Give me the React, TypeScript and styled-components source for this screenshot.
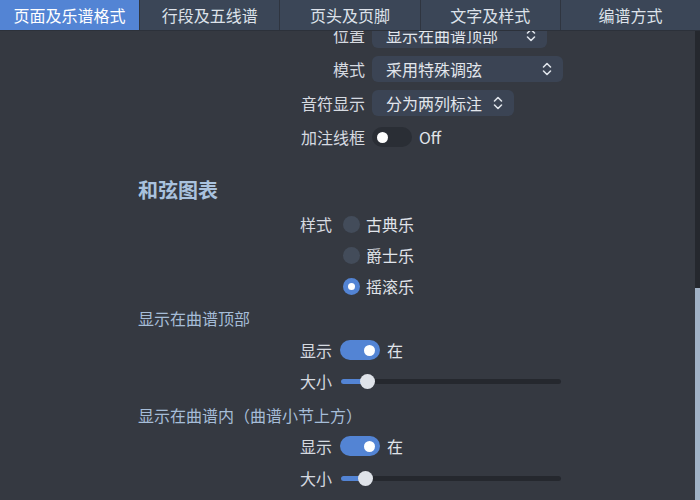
import React, { useLayoutEffect, useRef } from "react";
import styled, { createGlobalStyle } from "styled-components";

const Global = createGlobalStyle`
  html, body { margin: 0; padding: 0; background: #353941; }
  body { font-family: "Noto Sans CJK SC", "Noto Sans", sans-serif; }
  * { box-sizing: border-box; }
`;

const Page = styled.div`
  width: 700px;
  height: 500px;
  display: flex;
  flex-direction: column;
  background: #353941;
  overflow: hidden;
`;

const TabBar = styled.div`
  display: flex;
  height: 31px;
  flex: 0 0 31px;
  background: #3b4657;
  border-bottom: 1px solid #2c313a;
`;

const Tab = styled.div<{ $active?: boolean }>`
  flex: 1;
  display: flex;
  align-items: center;
  justify-content: center;
  font-size: 16px;
  color: ${(p) => (p.$active ? "#ffffff" : "#dde2ea")};
  background: ${(p) => (p.$active ? "#5384d4" : "transparent")};
  border-right: 1px solid #2f3540;
  &:last-child { border-right: none; }
`;

const Body = styled.div`
  flex: 1;
  display: flex;
  min-height: 0;
`;

const Viewport = styled.div`
  flex: 1;
  overflow: hidden;
`;

const ScrollTrack = styled.div`
  flex: 0 0 5px;
  display: flex;
  flex-direction: column;
  background: #25282e;
`;

const ScrollSpacer = styled.div`
  flex: 0 0 257px;
`;

const ScrollThumb = styled.div`
  flex: 1;
  background: #a2b3c7;
`;

const Content = styled.div`
  padding: 16px 0 60px 138px;
  display: flex;
  flex-direction: column;
`;

const Grid = styled.div<{ $label: number; $gap: number; $rowGap: number; $rowH: number; $mt: number }>`
  display: grid;
  grid-template-columns: ${(p) => p.$label}px auto;
  column-gap: ${(p) => p.$gap}px;
  row-gap: ${(p) => p.$rowGap}px;
  grid-auto-rows: ${(p) => p.$rowH}px;
  margin-top: ${(p) => p.$mt}px;
  align-items: center;
  justify-items: start;
`;

const Label = styled.div`
  justify-self: end;
  font-size: 16px;
  color: #d6dae0;
  line-height: 24px;
  white-space: nowrap;
`;

const Select = styled.div<{ $w: number }>`
  width: ${(p) => p.$w}px;
  height: 26px;
  border-radius: 6px;
  background: #3b4454;
  display: flex;
  align-items: center;
  justify-content: space-between;
  padding: 0 11px 0 14px;
  font-size: 16px;
  color: #e2e6ec;
  white-space: nowrap;
`;

const Heading = styled.div<{ $mt: number }>`
  margin-top: ${(p) => p.$mt}px;
  font-size: 20px;
  font-weight: 700;
  line-height: 28px;
  color: #a9c2de;
`;

const SubHeading = styled.div<{ $mt: number }>`
  margin-top: ${(p) => p.$mt}px;
  font-size: 16px;
  line-height: 24px;
  color: #a6bdd8;
  white-space: nowrap;
`;

const Inline = styled.div`
  display: flex;
  align-items: center;
  gap: 7px;
  font-size: 16px;
  color: #e0e4ea;
`;

const Toggle = styled.div<{ $on?: boolean }>`
  width: 40px;
  height: 20px;
  border-radius: 10px;
  background: ${(p) => (p.$on ? "#5384d4" : "#2a2e35")};
  display: flex;
  align-items: center;
  justify-content: ${(p) => (p.$on ? "flex-end" : "flex-start")};
  padding: 0 5px;
`;

const Knob = styled.div`
  width: 11px;
  height: 11px;
  border-radius: 50%;
  background: #ffffff;
`;

const Radio = styled.div<{ $on?: boolean }>`
  width: 17px;
  height: 17px;
  border-radius: 50%;
  background: ${(p) => (p.$on ? "#5384d4" : "#434c5a")};
  display: flex;
  align-items: center;
  justify-content: center;
  margin-left: 3px;
  &::after {
    content: "";
    display: ${(p) => (p.$on ? "block" : "none")};
    width: 7px;
    height: 7px;
    border-radius: 50%;
    background: #ffffff;
  }
`;

const RadioText = styled.span`
  font-size: 16px;
  color: #e0e4ea;
  margin-left: -1px;
`;

const SliderTrack = styled.div`
  width: 220px;
  height: 5px;
  border-radius: 3px;
  background: #25282e;
  display: flex;
  align-items: center;
  margin-left: 1px;
`;

const SliderFill = styled.div`
  height: 5px;
  border-radius: 3px 0 0 3px;
  background: #5384d4;
`;

const SliderKnob = styled.div`
  width: 15px;
  height: 15px;
  border-radius: 50%;
  background: #dfe3e9;
  margin-left: -7px;
`;

const Chevrons = () => (
  <svg width="10" height="16" viewBox="0 0 10 16" fill="none">
    <path d="M1.5 6 L5 2.5 L8.5 6" stroke="#dfe3ea" strokeWidth="1.6" strokeLinecap="round" strokeLinejoin="round" />
    <path d="M1.5 10 L5 13.5 L8.5 10" stroke="#dfe3ea" strokeWidth="1.6" strokeLinecap="round" strokeLinejoin="round" />
  </svg>
);

const Slider = ({ value }: { value: number }) => (
  <SliderTrack>
    <SliderFill style={{ width: value }} />
    <SliderKnob />
  </SliderTrack>
);

const tabs = ["页面及乐谱格式", "行段及五线谱", "页头及页脚", "文字及样式", "编谱方式"];

export default function App() {
  const vp = useRef<HTMLDivElement>(null);
  useLayoutEffect(() => {
    if (vp.current) vp.current.scrollTop = 25;
  }, []);

  return (
    <>
      <Global />
      <Page>
        <TabBar>
          {tabs.map((t, i) => (
            <Tab key={t} $active={i === 0}>
              {t}
            </Tab>
          ))}
        </TabBar>
        <Body>
          <Viewport ref={vp}>
            <Content>
              <Grid $label={227} $gap={7} $rowGap={8} $rowH={26} $mt={0}>
                <Label>位置</Label>
                <Select $w={175}>
                  显示在曲谱顶部
                  <Chevrons />
                </Select>
                <Label>模式</Label>
                <Select $w={191}>
                  采用特殊调弦
                  <Chevrons />
                </Select>
                <Label>音符显示</Label>
                <Select $w={142}>
                  分为两列标注
                  <Chevrons />
                </Select>
                <Label>加注线框</Label>
                <Inline>
                  <Toggle>
                    <Knob />
                  </Toggle>
                  Off
                </Inline>
              </Grid>

              <Heading $mt={26}>和弦图表</Heading>

              <Grid $label={194} $gap={8} $rowGap={7} $rowH={24} $mt={8}>
                <Label>样式</Label>
                <Inline>
                  <Radio />
                  <RadioText>古典乐</RadioText>
                </Inline>
                <span />
                <Inline>
                  <Radio />
                  <RadioText>爵士乐</RadioText>
                </Inline>
                <span />
                <Inline>
                  <Radio $on />
                  <RadioText>摇滚乐</RadioText>
                </Inline>
              </Grid>

              <SubHeading $mt={8}>显示在曲谱顶部</SubHeading>
              <Grid $label={194} $gap={8} $rowGap={7} $rowH={24} $mt={8}>
                <Label>显示</Label>
                <Inline>
                  <Toggle $on>
                    <Knob />
                  </Toggle>
                  在
                </Inline>
                <Label>大小</Label>
                <Slider value={26} />
              </Grid>

              <SubHeading $mt={10}>显示在曲谱内（曲谱小节上方）</SubHeading>
              <Grid $label={194} $gap={8} $rowGap={8} $rowH={24} $mt={7}>
                <Label>显示</Label>
                <Inline>
                  <Toggle $on>
                    <Knob />
                  </Toggle>
                  在
                </Inline>
                <Label>大小</Label>
                <Slider value={24} />
              </Grid>
            </Content>
          </Viewport>
          <ScrollTrack>
            <ScrollSpacer />
            <ScrollThumb />
          </ScrollTrack>
        </Body>
      </Page>
    </>
  );
}
